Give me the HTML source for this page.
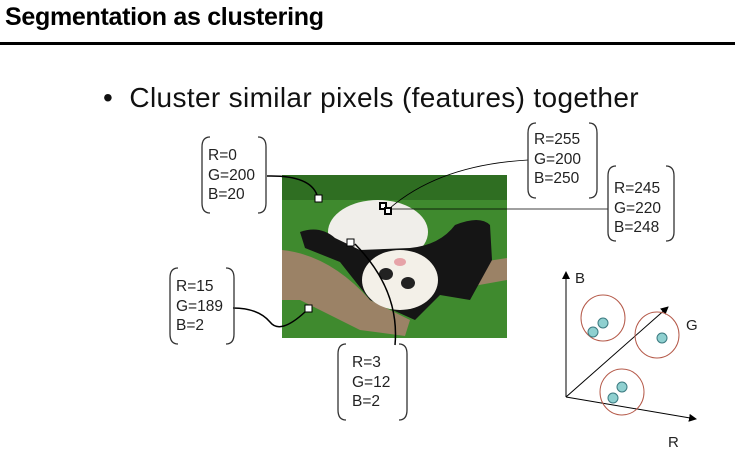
<!DOCTYPE html>
<html><head><style>
body{margin:0;width:735px;height:457px;background:#fff;overflow:hidden;position:relative;font-family:"Liberation Sans",sans-serif}
.t{position:absolute;left:5px;top:3px;font-size:25px;font-weight:bold;color:#000;letter-spacing:-0.3px}
.hr{position:absolute;left:0;top:42px;width:735px;height:3px;background:#000}
.b{position:absolute;left:103px;top:82px;font-size:28px;color:#111;letter-spacing:0.35px}
.lbl{position:absolute;font-size:15.5px;line-height:19.5px;color:#222}
</style></head><body>
<div class="t">Segmentation as clustering</div>
<div class="hr"></div>
<div class="b">•&nbsp; Cluster similar pixels (features) together</div>
<svg width="735" height="457" style="position:absolute;left:0;top:0">
<defs><marker id="a" markerWidth="8" markerHeight="8" refX="7" refY="4" orient="auto"><path d="M0,0L8,4L0,8z" fill="#000"/></marker></defs>
<rect x="282" y="175" width="225" height="163" fill="#3f8a2e"/>
<rect x="282" y="175" width="225" height="25" fill="#2f6e22"/>
<path d="M282,250 Q330,255 370,300 L410,320 L405,336 L360,330 L300,300 L282,300z" fill="#9b8266"/>
<path d="M430,270 L507,258 L507,280 L440,292z" fill="#9b8266"/>
<ellipse cx="378" cy="232" rx="50" ry="32" fill="#f0eeea"/>
<path d="M300,232 Q320,225 335,238 L360,250 L410,248 Q440,245 455,225 Q480,215 490,225 L492,260 L470,300 L440,295 L415,320 L370,300 L340,262 L305,248z" fill="#151515"/>
<ellipse cx="400" cy="280" rx="38" ry="30" fill="#f3f0e8"/>
<ellipse cx="386" cy="274" rx="7" ry="6" fill="#222"/><ellipse cx="408" cy="283" rx="7" ry="6" fill="#222"/>
<ellipse cx="400" cy="262" rx="6" ry="4" fill="#e6a3a8"/>
<g fill="#fff" stroke="#000" stroke-width="1">
<rect x="315" y="195" width="7" height="7"/><rect x="347" y="239" width="7" height="7"/><rect x="305" y="305" width="7" height="7"/>
<rect x="380" y="203" width="6" height="6" stroke-width="2"/><rect x="385" y="208" width="6" height="6" stroke-width="2"/>
</g>
<g fill="none" stroke="#000">
<path d="M267,176 Q310,175 317,195" stroke-width="1.5"/>
<path d="M233,308 Q258,308 270,322 Q280,335 305,312" stroke-width="1.5"/>
<path d="M395,345 Q400,290 355,244" stroke-width="1.5"/>
<path d="M528,160 Q440,165 390,208" stroke-width="0.8"/>
<path d="M608,209 L390,209" stroke-width="0.8"/>
</g>
<g fill="none" stroke="#333" stroke-width="1.3">
<path d="M210,137 Q202,137 202,147 V203 Q202,213 210,213"/><path d="M258,137 Q266,137 266,147 V203 Q266,213 258,213"/>
<path d="M178,268 Q170,268 170,278 V334 Q170,344 178,344"/><path d="M226,268 Q234,268 234,278 V334 Q234,344 226,344"/>
<path d="M346,344 Q338,344 338,354 V410 Q338,420 346,420"/><path d="M399,344 Q407,344 407,354 V410 Q407,420 399,420"/>
<path d="M536,123 Q528,123 528,133 V189 Q528,198 536,198"/><path d="M589,123 Q597,123 597,133 V189 Q597,198 589,198"/>
<path d="M616,166 Q608,166 608,176 V232 Q608,241 616,241"/><path d="M666,166 Q674,166 674,176 V232 Q674,241 666,241"/>
</g>
<g stroke="#000" stroke-width="1" fill="none">
<path d="M566,397 V272" marker-end="url(#a)"/>
<path d="M566,397 L696,419" marker-end="url(#a)"/>
<path d="M566,397 L668,307" marker-end="url(#a)"/>
</g>
<g fill="none" stroke="#b55a4a" stroke-width="1">
<ellipse cx="603" cy="318" rx="22" ry="23"/><ellipse cx="657" cy="335" rx="22" ry="23"/><ellipse cx="622" cy="392" rx="22" ry="23"/>
</g>
<g fill="#8fd0d0" stroke="#3c7a80" stroke-width="1">
<circle cx="593" cy="332" r="5"/><circle cx="603" cy="323" r="5"/><circle cx="662" cy="338" r="5"/>
<circle cx="613" cy="398" r="5"/><circle cx="622" cy="387" r="5"/>
</g>
<text x="575" y="283" font-size="15" fill="#222" font-family="Liberation Sans">B</text>
<text x="686" y="330" font-size="15" fill="#222" font-family="Liberation Sans">G</text>
<text x="668" y="447" font-size="15" fill="#222" font-family="Liberation Sans">R</text>
</svg>
<div class="lbl" style="left:208px;top:146px">R=0<br>G=200<br>B=20</div>
<div class="lbl" style="left:176px;top:277px">R=15<br>G=189<br>B=2</div>
<div class="lbl" style="left:352px;top:353px">R=3<br>G=12<br>B=2</div>
<div class="lbl" style="left:534px;top:130px">R=255<br>G=200<br>B=250</div>
<div class="lbl" style="left:614px;top:179px">R=245<br>G=220<br>B=248</div>
</body></html>
